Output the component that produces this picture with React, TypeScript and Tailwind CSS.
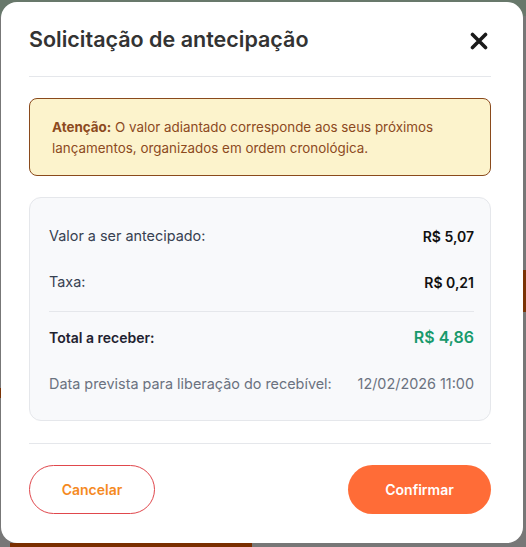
import React from "react";

export default function App() {
  return (
    <div
      className="relative w-[526px] h-[547px] overflow-hidden bg-[#777777]"
      style={{ fontFamily: "Inter, 'Noto Sans', sans-serif" }}
    >
      {/* dimmed page underneath */}
      <div className="absolute left-0 top-0 w-full h-[16px] bg-[#68786b]" />
      <div className="absolute right-0 top-[270px] w-[4px] h-[42px] bg-[#7a3306]" />
      <div className="absolute left-0 top-[388px] w-[2px] h-[10px] bg-[#7a3306]" />
      <div className="absolute left-[10px] top-[543px] w-[242px] h-[4px] bg-[#7a2e00]" />

      {/* modal */}
      <div className="absolute left-[1px] top-[2px] w-[522px] h-[541px] rounded-[16px] bg-white pl-[28px] pr-[32px] flex flex-col">
        <div className="flex items-center justify-between h-[74px] pt-[1px]">
          <h2 className="text-[21.5px] font-semibold text-[#333333]">
            Solicitação de antecipação
          </h2>
          <svg width="18" height="18" viewBox="0 0 18 18" className="mr-[3px] mt-[2px]">
            <path d="M2.5 2.5 L15.5 15.5 M15.5 2.5 L2.5 15.5" stroke="#1a1a1a" strokeWidth="3.6" strokeLinecap="round" />
          </svg>
        </div>
        <div className="h-px bg-[#e5e7eb]" />

        <div className="mt-[21px] rounded-[8px] border border-[#8a4a1c] bg-[#fcf3cc] pl-[22px] pr-4 pt-[18px] pb-[16px] text-[13.4px] leading-[21px] text-[#8c4a1e]">
          <span className="font-bold">Atenção:</span> O valor adiantado corresponde aos seus próximos
          lançamentos, organizados em ordem cronológica.
        </div>

        <div className="mt-[21px] rounded-[12px] border border-[#e5e7eb] bg-[#f8f9fb] pl-[19px] pr-[16px] pt-[26px] pb-[24px] text-[14.4px]">
          <div className="flex justify-between items-center h-[24px]">
            <span className="text-[#374151]">Valor a ser antecipado:</span>
            <span className="font-semibold text-[14px] text-[#111111]">R$ 5,07</span>
          </div>
          <div className="flex justify-between items-center h-[24px] mt-[22px]">
            <span className="text-[#374151]">Taxa:</span>
            <span className="font-semibold text-[14px] text-[#111111]">R$ 0,21</span>
          </div>
          <div className="h-px bg-[#e5e7eb] mt-[17px]" />
          <div className="flex justify-between items-center h-[28px] mt-[11px]">
            <span className="font-semibold text-[14px] text-[#1f2230]">Total a receber:</span>
            <span className="font-semibold text-[16px] text-[#189a6c]">R$ 4,86</span>
          </div>
          <div className="flex justify-between items-center h-[24px] mt-[21px]">
            <span className="text-[#6b7280]">Data prevista para liberação do recebível:</span>
            <span className="text-[#6b7280]">12/02/2026 11:00</span>
          </div>
        </div>

        <div className="h-px bg-[#e5e7eb] mt-[22px]" />

        <div className="flex justify-between items-center mt-[21px]">
          <button className="w-[126px] h-[49px] rounded-full border border-[#e0474c] bg-white text-[14px] font-semibold text-[#f58a1f]">
            Cancelar
          </button>
          <button className="w-[143px] h-[49px] rounded-full bg-[#ff6c37] text-[14px] font-semibold text-white">
            Confirmar
          </button>
        </div>
      </div>
    </div>
  );
}
